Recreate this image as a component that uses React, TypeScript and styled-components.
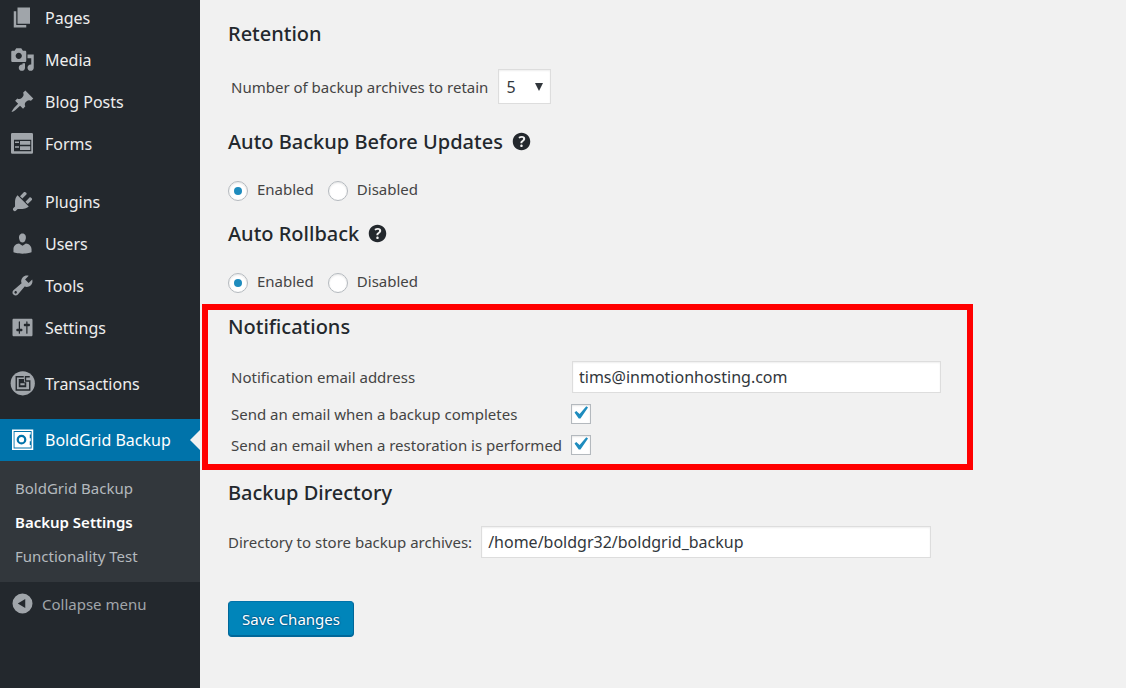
import React, { useState } from 'react';
import styled, { createGlobalStyle, css } from 'styled-components';

const GlobalStyle = createGlobalStyle`
  *, *::before, *::after { box-sizing: border-box; }
  body {
    margin: 0;
    background: #f1f1f1;
    color: #444;
    font-family: 'Noto Sans', 'Open Sans', sans-serif;
    font-size: 15px;
    line-height: 20px;
  }
`;

const Page = styled.div`
  display: flex;
  min-height: 100vh;
`;

/* ---------- sidebar ---------- */

const Sidebar = styled.nav`
  flex: 0 0 200px;
  background: #23282d;
  overflow: hidden;
`;

const MenuGroup = styled.ul<{ $gap?: number }>`
  list-style: none;
  margin: 0 0 ${p => p.$gap ?? 0}px;
  padding: 0;

  &:first-child { margin-top: -3px; }
`;

const MenuLink = styled.a<{ $active?: boolean }>`
  position: relative;
  display: flex;
  align-items: center;
  gap: 10px;
  height: 42px;
  padding-left: 10px;
  color: ${p => (p.$active ? '#fff' : '#eee')};
  background: ${p => (p.$active ? '#0073aa' : 'transparent')};
  font-size: 16px;
  text-decoration: none;
  white-space: nowrap;

  ${p => p.$active && css`
    &::after {
      content: '';
      position: absolute;
      right: 0;
      top: 11px;
      border: 10px solid transparent;
      border-left: 0;
      border-right-color: #f1f1f1;
    }
  `}
`;

const MenuIcon = styled.svg<{ $active?: boolean }>`
  flex: none;
  width: 25px;
  height: 25px;
  margin-bottom: 2px;
  fill: ${p => (p.$active ? '#fff' : '#a0a5aa')};
`;

const Submenu = styled.ul`
  list-style: none;
  margin: 0;
  padding: 10px 0 9px;
  background: #32373c;
`;

const SubmenuLink = styled.a<{ $current?: boolean }>`
  display: block;
  padding: 7px 15px;
  color: ${p => (p.$current ? '#fff' : '#b4b9be')};
  font-weight: ${p => (p.$current ? 600 : 400)};
  text-decoration: none;
`;

const CollapseButton = styled.button`
  display: flex;
  align-items: center;
  gap: 7px;
  height: 44px;
  padding: 0 0 0 10px;
  border: 0;
  background: none;
  color: #a0a5aa;
  font: inherit;
  cursor: pointer;
`;

/* ---------- content ---------- */

const Content = styled.main`
  flex: 1;
  min-width: 0;
  padding: 20px 28px;
`;

const Heading = styled.h2`
  display: flex;
  align-items: center;
  gap: 6px;
  margin: 0;
  color: #23282d;
  font-size: 20px;
  font-weight: 500;
  line-height: 28px;
`;

const HelpButton = styled.button`
  display: flex;
  padding: 0 0 2px;
  border: 0;
  background: none;
  cursor: pointer;
`;

const HelpIcon = styled.svg`
  width: 25px;
  height: 25px;
  fill: #23282d;
`;

const Section = styled.section<{ $gap?: number }>`
  margin-bottom: ${p => p.$gap ?? 20}px;
`;

const field = css`
  border: 1px solid #ddd;
  border-radius: 0;
  background: #fff;
  color: #32373c;
  font-family: inherit;
  font-size: 16px;
  box-shadow: inset 0 1px 2px rgba(0, 0, 0, 0.07);
`;

const RetentionRow = styled.div`
  display: flex;
  align-items: center;
  gap: 10px;
  margin-top: 21px;
  padding-left: 3px;
`;

const SelectBox = styled.span`
  position: relative;
  display: inline-flex;
`;

const Select = styled.select`
  ${field}
  appearance: none;
  width: 53px;
  height: 35px;
  padding: 0 7px;
`;

const SelectArrow = styled.svg`
  position: absolute;
  right: 8px;
  top: 14px;
  width: 8px;
  height: 8px;
  fill: #32373c;
  pointer-events: none;
`;

const RadioRow = styled.div`
  display: flex;
  gap: 14px;
  margin-top: 25px;
`;

const RadioLabel = styled.label`
  display: flex;
  gap: 9px;
  line-height: 16px;
`;

const Radio = styled.input`
  appearance: none;
  display: grid;
  place-items: center;
  width: 20px;
  height: 20px;
  margin: 0;
  border: 1px solid #b4b9be;
  border-radius: 50%;
  background: #fff;
  box-shadow: inset 0 1px 2px rgba(0, 0, 0, 0.1);

  &:checked::before {
    content: '';
    width: 8px;
    height: 8px;
    border-radius: 50%;
    background: #1e8cbe;
  }
`;

const HighlightedSection = styled.section`
  width: fit-content;
  margin: -8px 0 9px -26px;
  padding: 3px 25px 9px 20px;
  border: 6px solid #f00;
`;

const NotificationGrid = styled.div`
  display: grid;
  grid-template-columns: 340px auto;
  align-items: center;
  row-gap: 11px;
  margin-top: 20px;
  padding-left: 3px;
`;

const TextInput = styled.input<{ $width: number }>`
  ${field}
  width: ${p => p.$width}px;
  height: 32px;
  margin: 0 1px;
  padding: 0 6px;
`;

const CheckCell = styled.span`
  position: relative;
  display: inline-flex;
`;

const Checkbox = styled.input`
  appearance: none;
  width: 20px;
  height: 20px;
  margin: 0;
  border: 1px solid #b4b9be;
  background: #fff;
  box-shadow: inset 0 1px 2px rgba(0, 0, 0, 0.1);

  & + svg { visibility: hidden; }
  &:checked + svg { visibility: visible; }
`;

const CheckMark = styled.svg`
  position: absolute;
  left: -4px;
  top: -4px;
  width: 26px;
  height: 26px;
  fill: #1e8cbe;
  pointer-events: none;
`;

const DirectoryRow = styled.div`
  display: flex;
  align-items: center;
  gap: 8px;
  margin-top: 19px;
`;

const SaveButton = styled.button`
  height: 36px;
  margin-top: 23px;
  padding: 0 13px 1px;
  border: 1px solid #006799;
  border-top-color: #0073aa;
  border-radius: 4px;
  background: #0085ba;
  box-shadow: inset 0 -1px 0 #006799;
  color: #fff;
  font: inherit;
  text-shadow: 0 -1px 1px #006799, 1px 0 1px #006799, 0 1px 1px #006799, -1px 0 1px #006799;
  cursor: pointer;
`;

/* ---------- icons ---------- */

const icons: Record<string, React.ReactNode> = {
  pages: <path d="M6 15V2h10v13H6zm-1 1h8v2H3V5h2v11z" />,
  media: (
    <path d="M13 11V4c0-.55-.45-1-1-1h-1.67L9 1H5L3.67 3H2c-.55 0-1 .45-1 1v7c0 .55.45 1 1 1h10c.55 0 1-.45 1-1zM7 4.5c1.38 0 2.5 1.12 2.5 2.5S8.38 9.5 7 9.5 4.5 8.38 4.5 7 5.62 4.5 7 4.5zM14 6h5v10.5c0 1.38-1.12 2.5-2.5 2.5S14 17.88 14 16.5s1.12-2.5 2.5-2.5c.17 0 .34.02.5.05V9h-3V6zm-4 8.05V13h2v3.5c0 1.38-1.12 2.5-2.5 2.5S7 17.88 7 16.5 8.12 14 9.5 14c.17 0 .34.02.5.05z" />
  ),
  posts: (
    <path d="M10.44 3.02l1.82-1.82 6.36 6.35-1.83 1.82c-1.05-.68-2.48-.57-3.41.36l-.75.75c-.92.93-1.04 2.35-.35 3.41l-1.83 1.82-2.41-2.41-2.8 2.79c-.42.42-3.38 2.71-3.8 2.29s1.86-3.39 2.28-3.81l2.79-2.79L4.1 9.36l1.83-1.82c1.05.69 2.48.57 3.4-.36l.75-.75c.93-.92 1.05-2.35.36-3.41z" />
  ),
  forms: (
    <path
      fillRule="evenodd"
      d="M1.8 1.6h15.6a1 1 0 0 1 1 1v14.6a1 1 0 0 1-1 1H1.8a1 1 0 0 1-1-1V2.6a1 1 0 0 1 1-1zM3.2 7v9.2h13.8V7zM4 8.4h3.2v1.2H4zM4 12.2h3.2v1.2H4zM8 8h8.2v3H8zM8 12.2h8.2v3H8z"
    />
  ),
  plugins: (
    <path d="M13.11 4.36L9.87 7.6 8 5.73l3.24-3.24c.35-.34 1.05-.2 1.56.32.52.51.66 1.21.31 1.55zm-8 1.77l.91-1.12 9.01 9.01-1.19.84c-.71.71-2.63 1.16-3.82 1.16H6.14L4.9 17.26c-.59.59-1.54.59-2.12 0-.59-.58-.59-1.53 0-2.12l1.24-1.24v-3.88c0-1.13.4-3.19 1.09-3.89zm7.26 3.97l3.24-3.24c.34-.35 1.04-.21 1.55.31.52.51.66 1.21.31 1.55l-3.24 3.25z" />
  ),
  users: (
    <path d="M10 9.25c-2.27 0-2.73-3.44-2.73-3.44C7 4.02 7.82 2 9.97 2c2.16 0 2.98 2.02 2.71 3.81 0 0-.41 3.44-2.68 3.44zm0 2.57L12.72 10c2.39 0 4.52 2.33 4.52 4.53v2.49s-3.65 1.13-7.24 1.13c-3.65 0-7.24-1.13-7.24-1.13v-2.49c0-2.25 1.94-4.48 4.47-4.48z" />
  ),
  tools: (
    <path d="M16.68 9.77c-1.34 1.34-3.3 1.67-4.95.99l-5.41 6.52c-.99.99-2.59.99-3.58 0s-.99-2.59 0-3.57l6.52-5.42c-.68-1.65-.35-3.61.99-4.95 1.28-1.28 3.12-1.62 4.72-1.06l-2.89 2.89 2.82 2.82 2.86-2.87c.53 1.58.18 3.39-1.08 4.65zM3.81 16.21c.4.39 1.04.39 1.43 0 .4-.4.4-1.04 0-1.43-.39-.4-1.03-.4-1.43 0-.39.39-.39 1.03 0 1.43z" />
  ),
  settings: (
    <path d="M18 16V4c0-.55-.45-1-1-1H3c-.55 0-1 .45-1 1v12c0 .55.45 1 1 1h14c.55 0 1-.45 1-1zM8 11h1c.55 0 1 .45 1 1s-.45 1-1 1H8v1.5c0 .28-.22.5-.5.5s-.5-.22-.5-.5V13H6c-.55 0-1-.45-1-1s.45-1 1-1h1V5.5c0-.28.22-.5.5-.5s.5.22.5.5V11zm5-2h-1c-.55 0-1-.45-1-1s.45-1 1-1h1V5.5c0-.28.22-.5.5-.5s.5.22.5.5V7h1c.55 0 1 .45 1 1s-.45 1-1 1h-1v5.5c0 .28-.22.5-.5.5s-.5-.22-.5-.5V9z" />
  ),
  transactions: (
    <>
      <circle cx="10.2" cy="9.8" r="9.7" />
      <g fill="none" stroke="#23282d" strokeWidth="1.1">
        <path d="M15.8 4.6h-3.4v3.4h3.4v7.2H5V4.6h6" />
      </g>
      <path fill="#23282d" fillRule="evenodd" d="M7 6.4h4.2V9h1.8v4H7zM8.3 9.8v1.6h3.4V9.8z" />
    </>
  ),
  backup: (
    <>
      <path fillRule="evenodd" d="M1.6 2h17v16.4h-17zM2.9 3.2v14h14.4v-14z" />
      <path
        fillRule="evenodd"
        d="M3.6 4h13v12.4h-13zM9.2 6.2a3.9 3.9 0 1 0 0 7.8 3.9 3.9 0 0 0 0-7.8zM15.8 6v3h.8V6zM15.8 11.4v3h.8v-3z"
      />
      <path d="M9.2 8a2.1 2.1 0 1 0 0 4.2 2.1 2.1 0 0 0 0-4.2z" />
    </>
  ),
  collapse: (
    <path fillRule="evenodd" d="M10 2a8 8 0 1 1 0 16 8 8 0 0 1 0-16zM12.2 6.4L6.2 10l6 3.6z" />
  ),
};

function Icon({ name, active }: { name: string; active?: boolean }) {
  return (
    <MenuIcon viewBox="0 0 20 20" $active={active} aria-hidden="true">
      {icons[name]}
    </MenuIcon>
  );
}

function Help() {
  return (
    <HelpButton type="button" aria-label="Help">
      <HelpIcon viewBox="0 0 20 20" aria-hidden="true">
        <path d="M17 10c0-3.87-3.14-7-7-7-3.87 0-7 3.13-7 7s3.13 7 7 7c3.86 0 7-3.13 7-7zm-6.3 1.48H9.14v-.43c0-.38.08-.7.24-.98s.46-.57.88-.89c.41-.29.68-.53.81-.71.14-.18.2-.39.2-.62 0-.25-.09-.44-.28-.58-.19-.13-.45-.19-.79-.19-.58 0-1.25.19-2 .57l-.64-1.28c.87-.49 1.8-.74 2.77-.74.81 0 1.45.2 1.92.58.48.39.71.91.71 1.55 0 .43-.09.8-.29 1.11-.19.32-.57.67-1.11 1.06-.38.28-.61.49-.71.63-.1.15-.15.34-.15.57v.35zm-1.47 2.74c-.18-.17-.27-.42-.27-.73 0-.33.08-.58.26-.75s.43-.25.77-.25c.32 0 .57.09.75.26s.27.42.27.74c0 .3-.09.55-.27.72-.18.18-.43.27-.75.27-.33 0-.58-.09-.76-.26z" />
      </HelpIcon>
    </HelpButton>
  );
}

const menu = [
  {
    gap: 16,
    items: [
      ['pages', 'Pages'],
      ['media', 'Media'],
      ['posts', 'Blog Posts'],
      ['forms', 'Forms'],
    ],
  },
  {
    gap: 14,
    items: [
      ['plugins', 'Plugins'],
      ['users', 'Users'],
      ['tools', 'Tools'],
      ['settings', 'Settings'],
    ],
  },
  { gap: 14, items: [['transactions', 'Transactions']] },
];

function ToggleSetting({ title, name, gap }: { title: string; name: string; gap: number }) {
  const [enabled, setEnabled] = useState(true);
  return (
    <Section $gap={gap}>
      <Heading>
        {title}
        <Help />
      </Heading>
      <RadioRow>
        <RadioLabel>
          <Radio type="radio" name={name} checked={enabled} onChange={() => setEnabled(true)} />
          Enabled
        </RadioLabel>
        <RadioLabel>
          <Radio type="radio" name={name} checked={!enabled} onChange={() => setEnabled(false)} />
          Disabled
        </RadioLabel>
      </RadioRow>
    </Section>
  );
}

function NotificationCheck({ id, label }: { id: string; label: string }) {
  return (
    <>
      <label htmlFor={id}>{label}</label>
      <CheckCell>
        <Checkbox id={id} type="checkbox" defaultChecked />
        <CheckMark viewBox="0 0 20 20" aria-hidden="true">
          <path d="M14.83 4.89l1.34.94-5.81 8.38H9.02L5.78 9.67l1.34-1.25 2.57 2.4z" />
        </CheckMark>
      </CheckCell>
    </>
  );
}

export default function App() {
  return (
    <Page>
      <GlobalStyle />
      <Sidebar aria-label="Main menu">
        {menu.map(group => (
          <MenuGroup key={group.items[0][0]} $gap={group.gap}>
            {group.items.map(([icon, label]) => (
              <li key={icon}>
                <MenuLink href="#">
                  <Icon name={icon} />
                  {label}
                </MenuLink>
              </li>
            ))}
          </MenuGroup>
        ))}
        <MenuGroup>
          <li>
            <MenuLink href="#" $active>
              <Icon name="backup" active />
              BoldGrid Backup
            </MenuLink>
            <Submenu>
              <li><SubmenuLink href="#">BoldGrid Backup</SubmenuLink></li>
              <li><SubmenuLink href="#" $current aria-current="page">Backup Settings</SubmenuLink></li>
              <li><SubmenuLink href="#">Functionality Test</SubmenuLink></li>
            </Submenu>
          </li>
        </MenuGroup>
        <CollapseButton type="button">
          <Icon name="collapse" />
          Collapse menu
        </CollapseButton>
      </Sidebar>

      <Content>
        <form onSubmit={e => e.preventDefault()}>
          <Section $gap={24}>
            <Heading>Retention</Heading>
            <RetentionRow>
              <label htmlFor="retention">Number of backup archives to retain</label>
              <SelectBox>
                <Select id="retention" defaultValue="5">
                  {[1, 2, 3, 4, 5].map(n => <option key={n}>{n}</option>)}
                </Select>
                <SelectArrow viewBox="0 0 8 8" aria-hidden="true">
                  <path d="M0 0h8L4 8z" />
                </SelectArrow>
              </SelectBox>
            </RetentionRow>
          </Section>

          <ToggleSetting title="Auto Backup Before Updates" name="auto-backup" gap={19} />
          <ToggleSetting title="Auto Rollback" name="auto-rollback" gap={19} />

          <HighlightedSection>
            <Heading>Notifications</Heading>
            <NotificationGrid>
              <label htmlFor="email">Notification email address</label>
              <TextInput id="email" type="text" $width={369} defaultValue="tims@inmotionhosting.com" />
              <NotificationCheck id="on-backup" label="Send an email when a backup completes" />
              <NotificationCheck id="on-restore" label="Send an email when a restoration is performed" />
            </NotificationGrid>
          </HighlightedSection>

          <Section>
            <Heading>Backup Directory</Heading>
            <DirectoryRow>
              <label htmlFor="directory">Directory to store backup archives:</label>
              <TextInput id="directory" type="text" $width={450} defaultValue="/home/boldgr32/boldgrid_backup" />
            </DirectoryRow>
          </Section>

          <SaveButton type="submit">Save Changes</SaveButton>
        </form>
      </Content>
    </Page>
  );
}
